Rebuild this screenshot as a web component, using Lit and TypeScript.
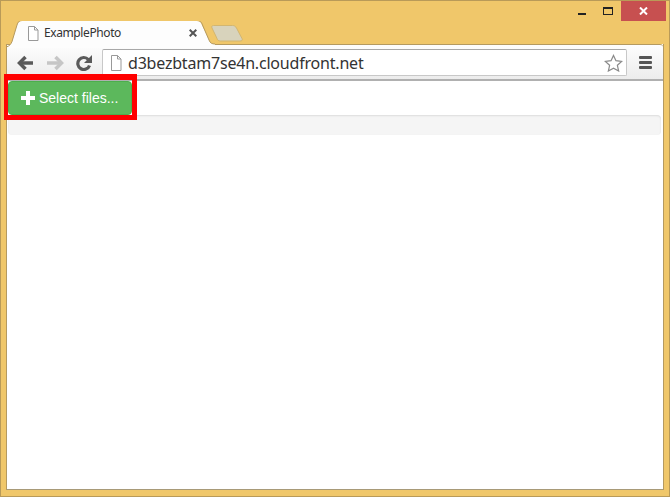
import { LitElement, html, css } from 'lit';
import { customElement } from 'lit/decorators.js';

@customElement('app-root')
export class AppRoot extends LitElement {
  static styles = css`
    :host {
      display: block;
      width: 670px;
      height: 497px;
      font-family: 'Liberation Sans', Arial, sans-serif;
    }
    .window {
      box-sizing: border-box;
      width: 670px;
      height: 497px;
      background: #f0c76a;
      border: 1px solid #b99a58;
      padding: 0 5px 6px 5px;
      display: flex;
      flex-direction: column;
    }
    .caption {
      height: 20px;
      display: flex;
      justify-content: flex-end;
      flex: none;
    }
    .caption .btn {
      display: flex;
      align-items: center;
      justify-content: center;
      height: 20px;
      box-sizing: border-box;
    }
    .caption .min { width: 27px; padding-top: 6px; }
    .caption .max { width: 26px; }
    .caption .close { width: 45px; margin-right: -2px; background: #c75050; }
    .tabstrip {
      height: 23px;
      flex: none;
      position: relative;
    }
    .tabshape { position: absolute; left: -6px; top: 0; }
    .tabtitle {
      position: absolute;
      left: 38px;
      top: 4px;
      font-family: 'Noto Sans', 'Open Sans', sans-serif;
      font-size: 12px;
      line-height: 16px;
      letter-spacing: -0.4px;
      color: #333;
    }
    .tabicon { position: absolute; left: 21px; top: 5px; }
    .tabclose { position: absolute; left: 183px; top: 8px; }
    .browser {
      flex: 1;
      display: flex;
      flex-direction: column;
      background: #fff;
      border-bottom: 1px solid #a89a78;
      border-left: 1px solid #b59a60;
      border-right: 1px solid #b59a60;
    }
    .toolbar {
      height: 37px;
      flex: none;
      box-sizing: border-box;
      display: flex;
      align-items: center;
      background: linear-gradient(#fdfdfd, #ececec);
      border-top: 1px solid #b59a60;
      border-bottom: 2px solid #b0b0b0;
      padding: 1px 0 0 10px;
      border-top-right-radius: 3px;
    }
    .nav { display: flex; flex: none; gap: 11px; margin-right: 9px; }
    .omnibox {
      box-sizing: border-box;
      width: 525px;
      height: 27px;
      background: #fff;
      border: 1px solid #c8c8c8;
      border-top-color: #a8a8a8;
      border-radius: 2px;
      display: flex;
      align-items: center;
      padding: 0 3px 0 7px;
      gap: 6px;
    }
    .url {
      flex: 1;
      font-family: 'Noto Sans', 'Open Sans', sans-serif;
      font-size: 16px;
      letter-spacing: -0.2px;
      color: #333;
      white-space: nowrap;
    }
    .menu { margin-left: 12px; display: block; }
    .page {
      flex: 1;
      padding: 0 2px 0 1px;
      position: relative;
    }
    .select-btn {
      box-sizing: border-box;
      width: 124px;
      height: 34px;
      background: #5cb85c;
      border: 1px solid #4cae4c;
      border-radius: 4px;
      color: #fff;
      font-family: 'Liberation Sans', Arial, sans-serif;
      font-size: 14px;
      display: flex;
      align-items: center;
      padding: 0 0 0 12px;
      gap: 4px;
    }
    .highlight {
      position: absolute;
      left: -3px;
      top: -7px;
      width: 133px;
      height: 46px;
      box-sizing: border-box;
      border-style: solid;
      border-color: #ff0000;
      border-width: 6px 5px 5px 4px;
    }
    .progress {
      height: 20px;
      border-radius: 4px;
      background: #f5f5f5;
      box-shadow: inset 0 1px 2px rgba(0, 0, 0, 0.1);
    }
  `;

  render() {
    return html`
      <div class="window">
        <div class="caption">
          <div class="btn min">
            <svg width="8" height="2"><rect width="8" height="2" fill="#222" /></svg>
          </div>
          <div class="btn max">
            <svg width="10" height="8">
              <rect x="0.5" y="0.5" width="9" height="7" fill="none" stroke="#222" />
              <rect width="10" height="2" fill="#222" />
            </svg>
          </div>
          <div class="btn close">
            <svg width="9" height="8" viewBox="0 0 9 8">
              <path d="M1 0.5L8 7.5M8 0.5L1 7.5" stroke="#fff" stroke-width="2" />
            </svg>
          </div>
        </div>
        <div class="tabstrip">
          <svg class="tabshape" width="245" height="27" viewBox="0 21 245 27">
            <path
              d="M213.500 25.500h19c2 0 3 .8 4 2.500l5.500 10.500c.8 1.500 0 2.500 -2 2.500h-19.500c-2 0 -3 -1 -3.500 -2.500l-5 -10.500c-.8 -1.500 0 -2.500 1.500 -2.500z"
              fill="#d8d3bc"
              stroke="#d2b671"
            />
            <path
              d="M7 47c2 -1 4 -3 5 -5l5 -17c1 -3 2 -4 5 -4h175c3 0 4 1 5 4l7 15c1 3 3 4 6 4v4h-208z"
              fill="#fdfdfd"
            />
            <path
              d="M6.500 47c3 -1 4.500 -3 5.500 -5.500l5 -16.500c1 -3 2 -4.500 5 -4.500h175c3 0 4.500 1.500 5.500 4.500l6.500 15c1 3 3 4 6 4"
              fill="none"
              stroke="#b59a60"
            />
          </svg>
          <svg class="tabicon" width="12" height="15" viewBox="0 0 12 15">
            <path d="M1.500 .5h6l3.500 3.500v10.500h-9.500z" fill="#fff" stroke="#999" />
            <path d="M7.500 .5v3.500h3.500" fill="none" stroke="#999" />
          </svg>
          <span class="tabtitle">ExamplePhoto</span>
          <svg class="tabclose" width="8" height="8" viewBox="0 0 8 8">
            <path d="M.7 .7L7.300 7.300M7.300 .7L.7 7.300" stroke="#555" stroke-width="2" />
          </svg>
        </div>
        <div class="browser">
          <div class="toolbar">
            <div class="nav">
              <svg width="18" height="16" viewBox="0 0 18 16">
                <path d="M16 8H4" stroke="#5a5a5a" stroke-width="3.500" />
                <path d="M8.500 2L2.500 8l6 6" fill="none" stroke="#5a5a5a" stroke-width="3.500" />
              </svg>
              <svg width="18" height="16" viewBox="0 0 18 16">
                <path d="M1 8H13" stroke="#c6c6c6" stroke-width="3.500" />
                <path d="M9.500 2l6 6l-6 6" fill="none" stroke="#c6c6c6" stroke-width="3.500" />
              </svg>
              <svg width="18" height="16" viewBox="0 0 18 16">
                <path d="M14.500 10.500a6 6 0 1 1 -1.200 -6" fill="none" stroke="#5a5a5a" stroke-width="3.200" />
                <path d="M17 0v8h-8z" fill="#5a5a5a" />
              </svg>
            </div>
            <div class="omnibox">
              <svg width="12" height="16" viewBox="0 0 12 16">
                <path d="M1.500 .5h6l3.500 3.500v11.500h-9.500z" fill="#fff" stroke="#999" />
                <path d="M7.500 .5v3.500h3.500" fill="none" stroke="#999" />
              </svg>
              <span class="url">d3bezbtam7se4n.cloudfront.net</span>
              <svg width="19" height="18" viewBox="0 0 20 19">
                <path
                  d="M10 1.500l2.600 5.600 6 .7 -4.500 4.100 1.300 6 -5.400 -3 -5.400 3 1.300 -6 -4.500 -4.100 6 -.7z"
                  fill="#fff"
                  stroke="#8a8a8a"
                  stroke-width="1.300"
                />
              </svg>
            </div>
            <svg class="menu" width="13" height="13" viewBox="0 0 13 13">
              <rect y="0" width="13" height="3" rx="1" fill="#555" />
              <rect y="5" width="13" height="3" rx="1" fill="#555" />
              <rect y="10" width="13" height="3" rx="1" fill="#555" />
            </svg>
          </div>
          <div class="page">
            <div class="select-btn">
              <svg width="14" height="14" viewBox="0 0 14 14">
                <path d="M7 0v14M0 7h14" stroke="#fff" stroke-width="4" />
              </svg>
              <span>Select files...</span>
            </div>
            <div class="progress"></div>
            <div class="highlight"></div>
          </div>
        </div>
      </div>
    `;
  }
}
